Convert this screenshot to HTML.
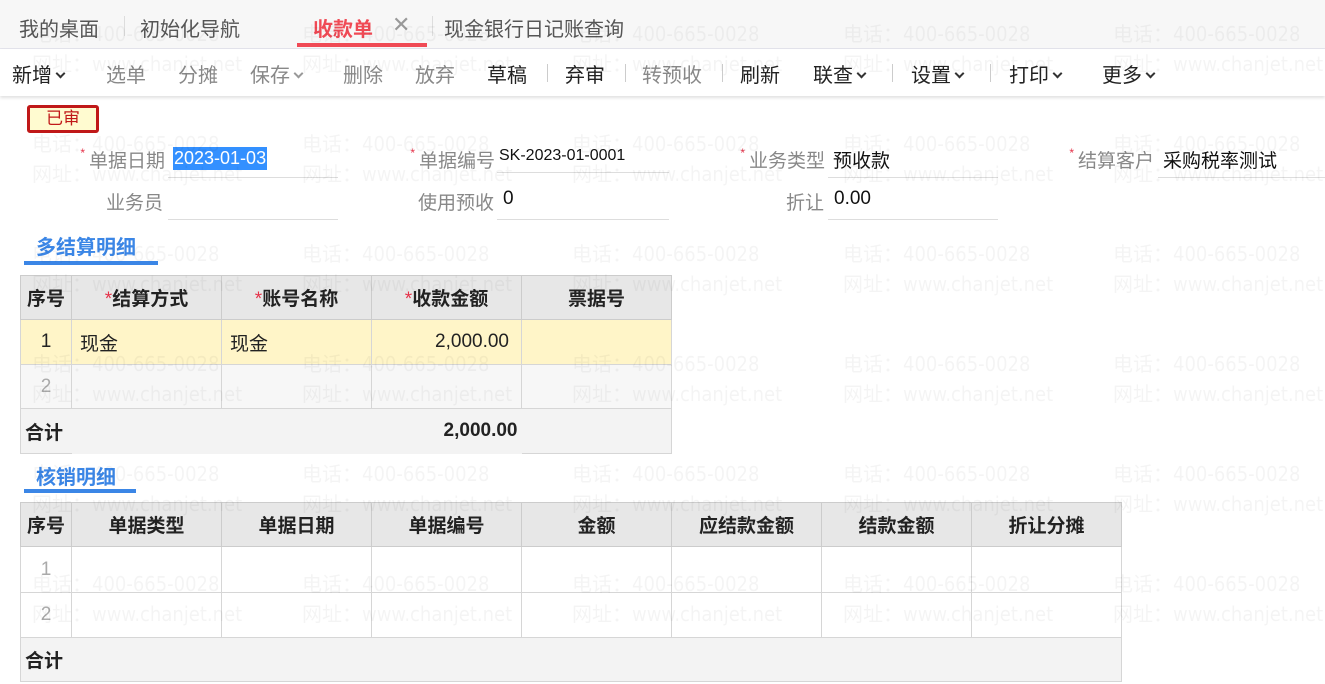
<!DOCTYPE html>
<html><head><meta charset="utf-8"><style>
*{margin:0;padding:0;box-sizing:border-box}
body{width:1325px;height:684px;overflow:hidden;background:#fff;font-family:"Liberation Sans","Noto Sans CJK SC",sans-serif;position:relative;color:#222}
.a{position:absolute;white-space:nowrap}
.wm{position:absolute;color:rgba(0,0,0,0.045);font-size:20px;white-space:nowrap;z-index:5;pointer-events:none;font-family:"DejaVu Sans Condensed","DejaVu Sans","Noto Sans CJK SC",sans-serif}
.tabs{position:absolute;left:0;top:0;width:1325px;height:49px;background:#f7f7f7;border-bottom:1px solid #e4e4ec}
.tb{position:absolute;top:13px;font-size:20px;color:#555}
.bar{position:absolute;left:0;top:49px;width:1325px;height:47px;background:#fff;box-shadow:0 2px 3px rgba(0,0,0,.12)}
.bi{position:absolute;top:59px;font-size:20px;color:#222}
.g{color:#888}
.sep{position:absolute;top:64px;width:1px;height:18px;background:#ccc}
.lab{position:absolute;font-size:19px;color:#888;text-align:right}
.st{color:#e5334a;font-size:12px;vertical-align:top;margin-right:4px}
.val{position:absolute;font-size:19px;color:#111}
.ul{position:absolute;height:1px;background:#ddd}
table{position:absolute;border-collapse:collapse;font-size:19px}
td{border:1px solid #d6d6d6;padding:0 8px}
th{border:1px solid #ccc;background:#e7e7e7;font-weight:bold;font-size:19px;color:#222}
.r{color:#e5334a;font-weight:normal}
.sec{position:absolute;font-size:20px;font-weight:bold;color:#3b86e6}
.chev{display:inline-block;width:7px;height:7px;border-right:2px solid #333;border-bottom:2px solid #333;transform:rotate(45deg);margin-left:5px;vertical-align:5px}
.chev.g2{border-color:#999}
</style></head><body>
<div class="tabs"></div>
<div class="tb" style="left:19px">我的桌面</div>
<div class="a" style="left:124px;top:16px;width:1px;height:20px;background:#ddd"></div>
<div class="tb" style="left:140px">初始化导航</div>
<div class="tb" style="left:313px;color:#f04a55;font-weight:bold">收款单</div>
<div class="tb" style="left:392px;color:#999;font-size:22px;top:12px">✕</div>
<div class="a" style="left:297px;top:43px;width:130px;height:4px;background:#f04a55"></div>
<div class="a" style="left:432px;top:16px;width:1px;height:20px;background:#ddd"></div>
<div class="tb" style="left:444px">现金银行日记账查询</div>
<div class="bar"></div>
<div class="bi" style="left:12px">新增<span class="chev"></span></div>
<div class="bi g" style="left:106px">选单</div>
<div class="bi g" style="left:178px">分摊</div>
<div class="bi g" style="left:250px">保存<span class="chev g2"></span></div>
<div class="bi g" style="left:343px">删除</div>
<div class="bi g" style="left:415px">放弃</div>
<div class="bi" style="left:487px">草稿</div>
<div class="sep" style="left:547px"></div>
<div class="bi" style="left:565px">弃审</div>
<div class="sep" style="left:625px"></div>
<div class="bi g" style="left:642px">转预收</div>
<div class="sep" style="left:722px"></div>
<div class="bi" style="left:740px">刷新</div>
<div class="bi" style="left:813px">联查<span class="chev"></span></div>
<div class="sep" style="left:892px"></div>
<div class="bi" style="left:911px">设置<span class="chev"></span></div>
<div class="sep" style="left:990px"></div>
<div class="bi" style="left:1009px">打印<span class="chev"></span></div>
<div class="bi" style="left:1102px">更多<span class="chev"></span></div>

<div class="a" style="left:27px;top:105px;width:72px;height:28px;border:3px solid #c01818;border-radius:3px;background:#fffbd0;color:#c01818;font-size:17px;text-align:center;line-height:22px">已审</div>

<div class="lab" style="left:55px;top:146px;width:110px"><span class="st">*</span>单据日期</div>
<div class="a" style="left:173px;top:147px;height:23px;background:#3390ff;color:#fff;font-size:18px;padding:0 1px;line-height:23px">2023-01-03</div>
<div class="ul" style="left:168px;top:177px;width:170px"></div>
<div class="lab" style="left:385px;top:146px;width:110px"><span class="st">*</span>单据编号</div>
<div class="val" style="left:499px;top:147px;font-size:16px">SK-2023-01-0001</div>
<div class="ul" style="left:497px;top:172px;width:172px"></div>
<div class="lab" style="left:715px;top:146px;width:110px"><span class="st">*</span>业务类型</div>
<div class="val" style="left:833px;top:146px">预收款</div>
<div class="ul" style="left:828px;top:177px;width:170px"></div>
<div class="lab" style="left:1045px;top:146px;width:109px"><span class="st">*</span>结算客户</div>
<div class="val" style="left:1163px;top:146px">采购税率测试</div>
<div class="ul" style="left:1158px;top:177px;width:167px"></div>

<div class="lab" style="left:55px;top:188px;width:108px">业务员</div>
<div class="ul" style="left:168px;top:219px;width:170px"></div>
<div class="lab" style="left:385px;top:188px;width:109px">使用预收</div>
<div class="val" style="left:503px;top:188px">0</div>
<div class="ul" style="left:497px;top:219px;width:172px"></div>
<div class="lab" style="left:715px;top:188px;width:109px">折让</div>
<div class="val" style="left:834px;top:188px">0.00</div>
<div class="ul" style="left:828px;top:219px;width:170px"></div>

<div class="sec" style="left:36px;top:231px">多结算明细</div>
<div class="a" style="left:24px;top:261px;width:134px;height:4px;background:#3b86e6"></div>

<table style="left:20px;top:275px;width:652px">
<tr style="height:44px"><th style="width:51px">序号</th><th style="width:150px"><span class="r">*</span>结算方式</th><th style="width:150px"><span class="r">*</span>账号名称</th><th style="width:150px"><span class="r">*</span>收款金额</th><th style="width:150px">票据号</th></tr>
<tr style="height:45px;background:#fff5c8"><td style="text-align:center">1</td><td>现金</td><td>现金</td><td style="text-align:right;padding-right:12px">2,000.00</td><td></td></tr>
<tr style="height:44px;background:#f7f7f7"><td style="text-align:center;color:#aaa">2</td><td></td><td></td><td></td><td></td></tr>
<tr style="height:45px;background:#f3f3f3;font-weight:bold"><td style="border-right:none;padding-left:4px">合计</td><td style="border:none;border-top:1px solid #d6d6d6"></td><td style="border:none;border-top:1px solid #d6d6d6"></td><td style="border:none;border-top:1px solid #d6d6d6;text-align:right;padding-right:4px">2,000.00</td><td style="border-left:none"></td></tr>
</table>

<div class="sec" style="left:36px;top:461px">核销明细</div>
<div class="a" style="left:24px;top:489px;width:112px;height:4px;background:#3b86e6"></div>

<table style="left:20px;top:502px;width:1102px">
<tr style="height:44px"><th style="width:51px">序号</th><th style="width:150px">单据类型</th><th style="width:150px">单据日期</th><th style="width:150px">单据编号</th><th style="width:150px">金额</th><th style="width:150px">应结款金额</th><th style="width:150px">结款金额</th><th style="width:150px">折让分摊</th></tr>
<tr style="height:46px"><td style="text-align:center;color:#aaa">1</td><td></td><td></td><td></td><td></td><td></td><td></td><td></td></tr>
<tr style="height:45px"><td style="text-align:center;color:#aaa">2</td><td></td><td></td><td></td><td></td><td></td><td></td><td></td></tr>
<tr style="height:44px;background:#f3f3f3;font-weight:bold"><td colspan="8" style="padding-left:4px">合计</td></tr>
</table>

<div class="wm" style="left:32px;top:18px">电话：400-665-0028</div><div class="wm" style="left:302px;top:18px">电话：400-665-0028</div><div class="wm" style="left:572px;top:18px">电话：400-665-0028</div><div class="wm" style="left:843px;top:18px">电话：400-665-0028</div><div class="wm" style="left:1113px;top:18px">电话：400-665-0028</div>
<div class="wm" style="left:32px;top:48px">网址：www.chanjet.net</div><div class="wm" style="left:302px;top:48px">网址：www.chanjet.net</div><div class="wm" style="left:572px;top:48px">网址：www.chanjet.net</div><div class="wm" style="left:843px;top:48px">网址：www.chanjet.net</div><div class="wm" style="left:1113px;top:48px">网址：www.chanjet.net</div>
<div class="wm" style="left:32px;top:128px">电话：400-665-0028</div><div class="wm" style="left:302px;top:128px">电话：400-665-0028</div><div class="wm" style="left:572px;top:128px">电话：400-665-0028</div><div class="wm" style="left:843px;top:128px">电话：400-665-0028</div><div class="wm" style="left:1113px;top:128px">电话：400-665-0028</div>
<div class="wm" style="left:32px;top:158px">网址：www.chanjet.net</div><div class="wm" style="left:302px;top:158px">网址：www.chanjet.net</div><div class="wm" style="left:572px;top:158px">网址：www.chanjet.net</div><div class="wm" style="left:843px;top:158px">网址：www.chanjet.net</div><div class="wm" style="left:1113px;top:158px">网址：www.chanjet.net</div>
<div class="wm" style="left:32px;top:238px">电话：400-665-0028</div><div class="wm" style="left:302px;top:238px">电话：400-665-0028</div><div class="wm" style="left:572px;top:238px">电话：400-665-0028</div><div class="wm" style="left:843px;top:238px">电话：400-665-0028</div><div class="wm" style="left:1113px;top:238px">电话：400-665-0028</div>
<div class="wm" style="left:32px;top:268px">网址：www.chanjet.net</div><div class="wm" style="left:302px;top:268px">网址：www.chanjet.net</div><div class="wm" style="left:572px;top:268px">网址：www.chanjet.net</div><div class="wm" style="left:843px;top:268px">网址：www.chanjet.net</div><div class="wm" style="left:1113px;top:268px">网址：www.chanjet.net</div>
<div class="wm" style="left:32px;top:348px">电话：400-665-0028</div><div class="wm" style="left:302px;top:348px">电话：400-665-0028</div><div class="wm" style="left:572px;top:348px">电话：400-665-0028</div><div class="wm" style="left:843px;top:348px">电话：400-665-0028</div><div class="wm" style="left:1113px;top:348px">电话：400-665-0028</div>
<div class="wm" style="left:32px;top:378px">网址：www.chanjet.net</div><div class="wm" style="left:302px;top:378px">网址：www.chanjet.net</div><div class="wm" style="left:572px;top:378px">网址：www.chanjet.net</div><div class="wm" style="left:843px;top:378px">网址：www.chanjet.net</div><div class="wm" style="left:1113px;top:378px">网址：www.chanjet.net</div>
<div class="wm" style="left:32px;top:458px">电话：400-665-0028</div><div class="wm" style="left:302px;top:458px">电话：400-665-0028</div><div class="wm" style="left:572px;top:458px">电话：400-665-0028</div><div class="wm" style="left:843px;top:458px">电话：400-665-0028</div><div class="wm" style="left:1113px;top:458px">电话：400-665-0028</div>
<div class="wm" style="left:32px;top:488px">网址：www.chanjet.net</div><div class="wm" style="left:302px;top:488px">网址：www.chanjet.net</div><div class="wm" style="left:572px;top:488px">网址：www.chanjet.net</div><div class="wm" style="left:843px;top:488px">网址：www.chanjet.net</div><div class="wm" style="left:1113px;top:488px">网址：www.chanjet.net</div>
<div class="wm" style="left:32px;top:568px">电话：400-665-0028</div><div class="wm" style="left:302px;top:568px">电话：400-665-0028</div><div class="wm" style="left:572px;top:568px">电话：400-665-0028</div><div class="wm" style="left:843px;top:568px">电话：400-665-0028</div><div class="wm" style="left:1113px;top:568px">电话：400-665-0028</div>
<div class="wm" style="left:32px;top:598px">网址：www.chanjet.net</div><div class="wm" style="left:302px;top:598px">网址：www.chanjet.net</div><div class="wm" style="left:572px;top:598px">网址：www.chanjet.net</div><div class="wm" style="left:843px;top:598px">网址：www.chanjet.net</div><div class="wm" style="left:1113px;top:598px">网址：www.chanjet.net</div>
</body></html>
